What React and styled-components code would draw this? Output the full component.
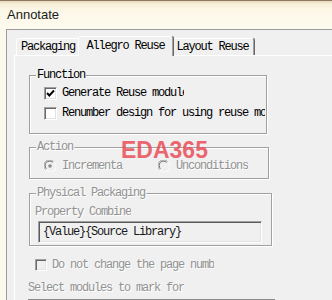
import React from "react";
import styled, { createGlobalStyle } from "styled-components";

const Global = createGlobalStyle`
  html, body { margin: 0; padding: 0; background: #fcf9ec; }
  body { width: 332px; height: 300px; overflow: hidden; }
`;

const mono = `font-family: "Liberation Mono", "Courier New", monospace; font-size: 12px; letter-spacing: -1.2px;`;

const Window = styled.div`
  position: relative;
  width: 332px;
  height: 300px;
  overflow: hidden;
  display: flex;
  flex-direction: column;
  background: #fcf9ec;
`;

const TitleBar = styled.div`
  flex: 0 0 29px;
  box-sizing: border-box;
  border-top: 1px solid #8d7b5f;
  background: linear-gradient(#e6d8bb 0, #f7efd9 3px, #fcf8e8 10px, #fdfaef 100%);
  padding-left: 7px;
  padding-bottom: 1px;
  display: flex;
  align-items: center;
  font: 13px "Liberation Sans", Arial, sans-serif;
  color: #1b1b1b;
`;

const Client = styled.div`
  flex: 1;
  margin-left: 6px;
  border-top: 1px solid #9c9c9c;
  border-left: 1px solid #9c9c9c;
  background: #f0f0f0;
  padding: 6px 0 0 7px;
  display: flex;
  flex-direction: column;
`;

const TabStrip = styled.div`
  display: flex;
  align-items: flex-end;
  height: 19px;
  padding-left: 2px;
`;

const Tab = styled.div`
  box-sizing: border-box;
  width: ${(p) => p.$w + (p.$active ? 4 : 0)}px;
  height: ${(p) => (p.$active ? 20 : 17)}px;
  margin: ${(p) => (p.$active ? "0 -2px -1px" : "0")};
  position: ${(p) => (p.$active ? "relative" : "static")};
  z-index: ${(p) => (p.$active ? 1 : 0)};
  border-style: solid;
  border-width: 1px 1px 0 1px;
  border-color: #ffffff #a0a0a0 transparent #ffffff;
  box-shadow: 1px 0 0 #696969;
  border-radius: 2px 2px 0 0;
  background: #f0f0f0;
  display: flex;
  align-items: center;
  justify-content: center;
  padding-bottom: ${(p) => (p.$active ? 2 : 0)}px;
  ${mono}
  color: #000;
  white-space: nowrap;
`;

const Panel = styled.div`
  flex: 1;
  border-top: 1px solid #ffffff;
  border-left: 1px solid #ffffff;
  padding-left: 13px;
  display: flex;
  flex-direction: column;
  align-items: flex-start;
`;

const Group = styled.div`
  position: relative;
  box-sizing: border-box;
  width: ${(p) => p.$w}px;
  margin: ${(p) => p.$mt}px 0 0 1px;
  border: 1px solid #a0a0a0;
  box-shadow: inset 1px 1px 0 #ffffff, 1px 1px 0 #ffffff;
  padding: ${(p) => p.$pad};
  display: flex;
  flex-direction: column;
  align-items: flex-start;
`;

const GroupLabel = styled.span`
  position: absolute;
  left: 6px;
  top: -8px;
  padding: 0 1px;
  line-height: 14px;
  background: #f0f0f0;
  ${mono}
  color: ${(p) => (p.$disabled ? "#939393" : "#000")};
  text-shadow: ${(p) => (p.$disabled ? "1px 1px 0 #fff" : "none")};
`;

const Row = styled.div`
  display: flex;
  align-items: center;
  height: ${(p) => p.$h || 20}px;
  margin: ${(p) => p.$m || "0"};
  padding-left: ${(p) => p.$pl || 0}px;
`;

const Text = styled.span`
  ${mono}
  line-height: 14px;
  white-space: nowrap;
  overflow: hidden;
  display: block;
  ${(p) => (p.$clip ? `width: ${p.$clip}px;` : "")}
  color: ${(p) => (p.$disabled ? "#939393" : "#000")};
  text-shadow: ${(p) => (p.$disabled ? "1px 1px 0 #fff" : "none")};
`;

const Box = styled.span`
  box-sizing: border-box;
  flex: 0 0 ${(p) => p.$size}px;
  width: ${(p) => p.$size}px;
  height: ${(p) => p.$size}px;
  margin-right: ${(p) => p.$gap}px;
  border: 1px solid;
  border-color: #a0a0a0 #ffffff #ffffff #a0a0a0;
  box-shadow: inset 1px 1px 0 #696969, inset -1px -1px 0 #e3e3e3;
  background: ${(p) => (p.$disabled ? "#f0f0f0" : "#ffffff")};
  display: flex;
  align-items: center;
  justify-content: center;
`;

const RadioItem = styled.div`
  display: flex;
  align-items: center;
  ${(p) => (p.$w ? `width: ${p.$w}px;` : "")}
`;

const RadioSvg = styled.svg`
  flex: 0 0 12px;
  margin-right: ${(p) => p.$gap}px;
`;

const Field = styled.div`
  box-sizing: border-box;
  width: 224px;
  height: 22px;
  margin: 2px 0 0 8px;
  border: 1px solid;
  border-color: #a0a0a0 #ffffff #ffffff #a0a0a0;
  box-shadow: inset 1px 1px 0 #5a5a5a, inset -1px -1px 0 #e3e3e3;
  background: #f0f0f0;
  padding-left: 4px;
  display: flex;
  align-items: center;
  ${mono}
  color: #1a1a1a;
  white-space: nowrap;
`;

const ListTop = styled.div`
  width: 246px;
  height: 10px;
  margin-top: 4px;
  border-top: 1px solid #8a8a8a;
  border-left: 1px solid #8a8a8a;
  box-shadow: inset 1px 1px 0 #696969;
`;

const Watermark = styled.div`
  position: absolute;
  left: 121px;
  top: 139px;
  font: bold 23px/23px "Liberation Sans", Arial, sans-serif;
  color: rgba(233, 70, 80, 0.82);
  pointer-events: none;
`;

const Check = () => (
  <svg width="9" height="9" viewBox="0 0 9 9">
    <polyline points="1,4 3.3,6.5 8,1.5" fill="none" stroke="#000" strokeWidth="1.9" />
  </svg>
);

const Radio = ({ checked, gap }) => (
  <RadioSvg width="12" height="12" viewBox="0 0 12 12" $gap={gap}>
    <circle cx="6" cy="6" r="5" fill="#f0f0f0" />
    <path d="M1.5 9.5 A5.5 5.5 0 0 1 9.5 1.5" fill="none" stroke="#a0a0a0" strokeWidth="1" />
    <path d="M2.4 8.6 A4.3 4.3 0 0 1 8.6 2.4" fill="none" stroke="#696969" strokeWidth="1" />
    <path d="M10.5 2.5 A5.5 5.5 0 0 1 2.5 10.5" fill="none" stroke="#ffffff" strokeWidth="1" />
    {checked && <circle cx="6" cy="6" r="1.8" fill="#8a8a8a" />}
  </RadioSvg>
);

export default function App() {
  return (
    <>
      <Global />
      <Window>
        <TitleBar>Annotate</TitleBar>
        <Client>
          <TabStrip>
            <Tab $w={64}>Packaging</Tab>
            <Tab $w={91} $active>Allegro Reuse</Tab>
            <Tab $w={83}>Layout Reuse</Tab>
          </TabStrip>
          <Panel>
            <Group $w={238} $mt={19} $pad="7px 0 10px 0">
              <GroupLabel>Function</GroupLabel>
              <Row $pl={14}>
                <Box $size={13} $gap={5}><Check /></Box>
                <Text $clip={122}>Generate Reuse module</Text>
              </Row>
              <Row $pl={14}>
                <Box $size={13} $gap={5} />
                <Text $clip={203}>Renumber design for using reuse modules</Text>
              </Row>
            </Group>

            <Group $w={240} $mt={13} $pad="8px 0 2px 0">
              <GroupLabel $disabled>Action</GroupLabel>
              <Row $pl={14}>
                <RadioItem $w={114}>
                  <Radio checked gap={6} />
                  <Text $disabled $clip={61}>Incremental</Text>
                </RadioItem>
                <RadioItem>
                  <Radio gap={6} />
                  <Text $disabled>Unconditions</Text>
                </RadioItem>
              </Row>
            </Group>

            <Group $w={243} $mt={14} $pad="11px 0 2px 0">
              <GroupLabel $disabled>Physical Packaging</GroupLabel>
              <Row $h={14} $pl={5}>
                <Text $disabled>Property Combine</Text>
              </Row>
              <Field>{"{Value}{Source Library}"}</Field>
            </Group>

            <Row $h={14} $m="12px 0 0 7px">
              <Box $size={12} $gap={5} $disabled />
              <Text $disabled>Do not change the page numb</Text>
            </Row>

            <Row $h={14} $m="9px 0 0 0">
              <Text $disabled>Select modules to mark for</Text>
            </Row>

            <ListTop />
          </Panel>
        </Client>
        <Watermark>EDA365</Watermark>
      </Window>
    </>
  );
}
